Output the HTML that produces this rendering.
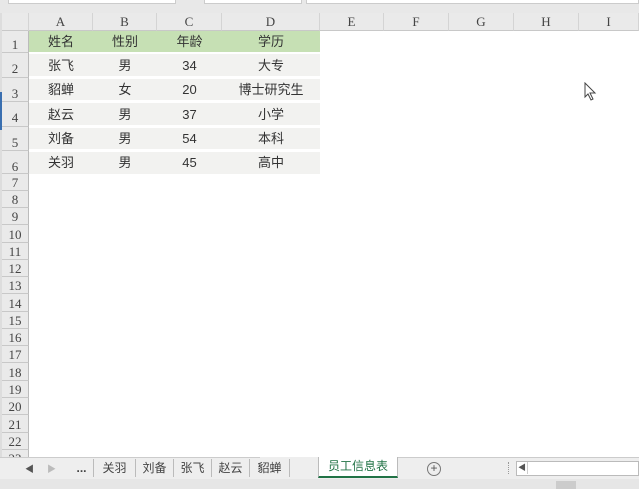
<!DOCTYPE html><html><head><meta charset="utf-8"><style>
*{margin:0;padding:0;box-sizing:border-box}
body{width:639px;height:489px;overflow:hidden;background:#fff;position:relative;font-family:"Liberation Sans","Noto Sans CJK SC",sans-serif}
.a{position:absolute}
.ch{position:absolute;top:13px;height:18px;border-right:1px solid #d4d4d4;border-bottom:1px solid #c8c8c8;background:#eaeaea;font:13px "Liberation Serif",serif;color:#444;text-align:center;line-height:18px}
.rh{position:absolute;left:2px;width:27px;border-bottom:1px solid #c8c8c8;border-right:1px solid #bbb;background:#eaeaea;font:13px "Liberation Serif",serif;color:#444;text-align:center}
.r{position:absolute;left:29px;width:291px;display:flex;font-size:13px;color:#333;line-height:22px}
.r div{text-align:center}
.tab{position:absolute;top:459px;font-size:12px;color:#444;height:18px;line-height:18px;border-right:1px solid #bbb;text-align:center}
</style></head><body>
<div class="a" style="left:0;top:0;width:639px;height:13px;background:#e8e8e8"></div>
<div class="a" style="left:8px;top:0;width:168px;height:4px;background:#fff;border:1px solid #ccc;border-top:none"></div>
<div class="a" style="left:204px;top:0;width:98px;height:4px;background:#fff;border:1px solid #ccc;border-top:none"></div>
<div class="a" style="left:306px;top:0;width:333px;height:4px;background:#fff;border:1px solid #ccc;border-top:none"></div>
<div class="a" style="left:0;top:13px;width:2px;height:444px;background:#ddd"></div>
<div class="a" style="left:0;top:92px;width:3px;height:38px;background:#3a6fb0"></div>
<div class="ch" style="left:2px;width:27px"></div>
<div class="ch" style="left:29px;width:64px">A</div>
<div class="ch" style="left:93px;width:64px">B</div>
<div class="ch" style="left:157px;width:65px">C</div>
<div class="ch" style="left:222px;width:98px">D</div>
<div class="ch" style="left:320px;width:64px">E</div>
<div class="ch" style="left:384px;width:65px">F</div>
<div class="ch" style="left:449px;width:65px">G</div>
<div class="ch" style="left:514px;width:65px">H</div>
<div class="ch" style="left:579px;width:60px">I</div>
<div class="rh" style="top:31px;height:22px;line-height:28px">1</div>
<div class="rh" style="top:53px;height:25px;line-height:32px">2</div>
<div class="rh" style="top:78px;height:24px;line-height:31px">3</div>
<div class="rh" style="top:102px;height:25px;line-height:32px">4</div>
<div class="rh" style="top:127px;height:24px;line-height:31px">5</div>
<div class="rh" style="top:151px;height:23px;line-height:31px">6</div>
<div class="rh" style="top:174px;height:17px;line-height:18px">7</div>
<div class="rh" style="top:191px;height:17px;line-height:18px">8</div>
<div class="rh" style="top:208px;height:17px;line-height:18px">9</div>
<div class="rh" style="top:225px;height:18px;line-height:19px">10</div>
<div class="rh" style="top:243px;height:17px;line-height:18px">11</div>
<div class="rh" style="top:260px;height:17px;line-height:18px">12</div>
<div class="rh" style="top:277px;height:17px;line-height:18px">13</div>
<div class="rh" style="top:294px;height:18px;line-height:19px">14</div>
<div class="rh" style="top:312px;height:17px;line-height:18px">15</div>
<div class="rh" style="top:329px;height:17px;line-height:18px">16</div>
<div class="rh" style="top:346px;height:17px;line-height:18px">17</div>
<div class="rh" style="top:363px;height:18px;line-height:19px">18</div>
<div class="rh" style="top:381px;height:17px;line-height:18px">19</div>
<div class="rh" style="top:398px;height:17px;line-height:18px">20</div>
<div class="rh" style="top:415px;height:18px;line-height:19px">21</div>
<div class="rh" style="top:433px;height:17px;line-height:18px">22</div>
<div class="rh" style="top:450px;height:17px;line-height:18px">23</div>
<div class="r" style="top:31px;height:21px;background:#c6e0b4;line-height:22px"><div style="width:64px">姓名</div><div style="width:64px">性别</div><div style="width:65px">年龄</div><div style="width:98px">学历</div></div>
<div class="r" style="top:54px;height:22px;background:#f2f2f0;line-height:24px"><div style="width:64px">张飞</div><div style="width:64px">男</div><div style="width:65px">34</div><div style="width:98px">大专</div></div>
<div class="r" style="top:79px;height:21px;background:#f2f2f0;line-height:22px"><div style="width:64px">貂蝉</div><div style="width:64px">女</div><div style="width:65px">20</div><div style="width:98px">博士研究生</div></div>
<div class="r" style="top:103px;height:22px;background:#f2f2f0;line-height:24px"><div style="width:64px">赵云</div><div style="width:64px">男</div><div style="width:65px">37</div><div style="width:98px">小学</div></div>
<div class="r" style="top:128px;height:21px;background:#f2f2f0;line-height:22px"><div style="width:64px">刘备</div><div style="width:64px">男</div><div style="width:65px">54</div><div style="width:98px">本科</div></div>
<div class="r" style="top:152px;height:22px;background:#f2f2f0;line-height:22px"><div style="width:64px">关羽</div><div style="width:64px">男</div><div style="width:65px">45</div><div style="width:98px">高中</div></div>
<svg class="a" style="left:584px;top:82px" width="14" height="20"><path d="M1 1 L1 15 L4 12 L7 18 L9 17 L6 11 L11 11 Z" fill="#fff" stroke="#444" stroke-width="1"/></svg>
<div class="a" style="left:0;top:457px;width:639px;height:22px;background:#eeeeee;border-top:1px solid #ccc"></div>
<div class="a" style="left:25px;top:462px;font-size:9px;color:#555">◀</div>
<div class="a" style="left:47px;top:462px;font-size:9px;color:#bbb">▶</div>
<div class="tab" style="left:70px;width:24px;font-weight:bold">...</div>
<div class="tab" style="left:94px;width:42px">关羽</div>
<div class="tab" style="left:136px;width:38px">刘备</div>
<div class="tab" style="left:174px;width:38px">张飞</div>
<div class="tab" style="left:212px;width:38px">赵云</div>
<div class="tab" style="left:250px;width:40px;border-right:none">貂蝉</div>
<div class="a" style="left:260px;top:457px;width:66px;height:21px;background:#fff;border-left:1px solid #bbb;border-right:1px solid #bbb;border-bottom:2px solid #217346;font-size:12px;color:#217346;text-align:center;line-height:19px;left:260px"></div>
<div class="a" style="left:250px;top:459px;width:40px;height:18px;font-size:12px;color:#444;text-align:center;line-height:18px;background:#eee">貂蝉</div>
<div class="a" style="left:318px;top:457px;width:80px;height:21px;background:#fff;border-left:1px solid #bbb;border-right:1px solid #bbb;border-bottom:2px solid #217346;font-size:12px;color:#217346;text-align:center;line-height:19px">员工信息表</div>
<div class="a" style="left:260px;top:457px;width:58px;height:21px;background:#eee"></div>
<div class="a" style="left:250px;top:459px;width:40px;height:18px;font-size:12px;color:#444;text-align:center;line-height:18px;border-right:1px solid #bbb">貂蝉</div>
<div class="a" style="left:427px;top:462px;width:14px;height:14px;border:1px solid #777;border-radius:50%;font-size:12px;line-height:11px;text-align:center;color:#555">+</div>
<div class="a" style="left:508px;top:462px;width:1px;height:12px;border-left:1px dotted #999"></div>
<div class="a" style="left:516px;top:461px;width:123px;height:15px;background:#fff;border:1px solid #bbb"></div>
<div class="a" style="left:518px;top:462px;width:10px;height:12px;font-size:8px;color:#555;line-height:12px;border-right:1px solid #ccc">◀</div>
<div class="a" style="left:0;top:479px;width:639px;height:10px;background:#e6e6e6"></div>
<div class="a" style="left:556px;top:481px;width:20px;height:8px;background:#ccc"></div>
</body></html>
